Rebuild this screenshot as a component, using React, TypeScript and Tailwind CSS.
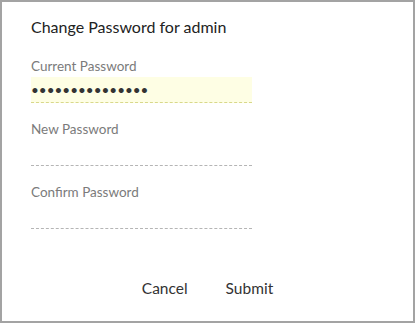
import React from "react";

function Field({ label, value, filled }: { label: string; value?: string; filled?: boolean }) {
  return (
    <div className="flex flex-col">
      <label className="text-[13.5px] leading-[16px] text-[#7b7b7b] h-[16px]">{label}</label>
      <input
        type="password"
        readOnly
        defaultValue={value}
        className={
          "mt-[3px] h-[26px] w-[221px] border-0 border-b border-dashed px-0 pt-[1px] text-[13.5px] text-[#333] outline-none " +
          (filled ? "bg-[#fefee4] border-[#d8d88a]" : "bg-transparent border-[#b5b5b5]")
        }
        style={{ fontFamily: "Lato, sans-serif" }}
      />
    </div>
  );
}

export default function App() {
  return (
    <div
      className="w-[415px] h-[323px] border-2 border-[#a3a3a3] bg-white flex flex-col pl-[29px] pt-[15px]"
      style={{ fontFamily: "Lato, 'Liberation Sans', sans-serif" }}
    >
      <h1 className="text-[16px] leading-[19px] text-[#222]">Change Password for admin</h1>
      <div className="mt-[22px] flex flex-col gap-[18px]">
        <Field label="Current Password" value="passwordpasswor" filled />
        <Field label="New Password" />
        <Field label="Confirm Password" />
      </div>
      <div className="mt-auto mb-[24px] -ml-[29px] flex justify-center gap-[14px]">
        <button className="px-[12px] text-[15.5px] leading-[18px] text-[#333]">Cancel</button>
        <button className="px-[12px] text-[15.5px] leading-[18px] text-[#333]">Submit</button>
      </div>
    </div>
  );
}
